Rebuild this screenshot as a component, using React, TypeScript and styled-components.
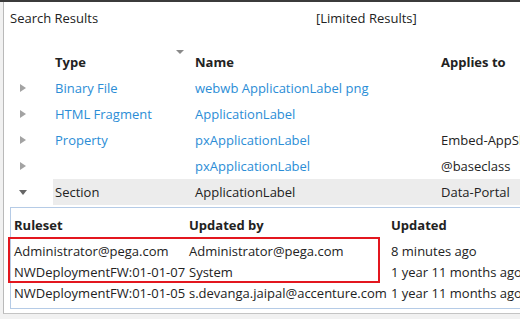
import React from "react";
import styled, { createGlobalStyle } from "styled-components";

const Global = createGlobalStyle`
  html, body { margin: 0; padding: 0; background: #f1f1f1; }
  body { font-family: "Open Sans", "DejaVu Sans", sans-serif; font-size: 13px; color: #222; }
`;

const Screen = styled.div`
  width: 520px;
  height: 319px;
  overflow: hidden;
  border-top: 2px solid #3b3b3b;
  box-sizing: border-box;
  background: #f1f1f1;
`;

const Panel = styled.div`
  margin-left: 3px;
  width: 560px;
  background: #fff;
  border-left: 1px solid #b9b9b9;
  border-bottom: 1px solid #c4c4c4;
  padding-bottom: 4px;
`;

const TitleBar = styled.div`
  display: flex;
  height: 47px;
  padding: 7px 0 0 6px;
  box-sizing: border-box;
  line-height: 18px;
  white-space: nowrap;
`;

const Title = styled.span`
  width: 306px;
`;

const Limited = styled.span`
  color: #222;
`;

const Grid = styled.div`
  display: grid;
  grid-template-columns: 49px 140px 246px 1fr;
  white-space: nowrap;
`;

const Cell = styled.div<{ $head?: boolean; $hl?: boolean; $link?: boolean }>`
  position: relative;
  height: 26px;
  line-height: 26px;
  padding-left: 2px;
  font-weight: ${(p) => (p.$head ? 700 : 400)};
  color: ${(p) => (p.$link ? "#2b8dd6" : "#222")};
  background: ${(p) => (p.$hl ? "#ececec" : "transparent")};
  overflow: hidden;
`;

const ExpCell = styled.div`
  height: 26px;
  display: flex;
  align-items: center;
  padding-left: 16px;
`;

const RightTri = styled.span`
  width: 0;
  height: 0;
  border-top: 4px solid transparent;
  border-bottom: 4px solid transparent;
  border-left: 6px solid #a3a3a3;
`;

const DownTri = styled.span`
  width: 0;
  height: 0;
  margin-left: -1px;
  border-left: 4px solid transparent;
  border-right: 4px solid transparent;
  border-top: 5px solid #666;
`;

const SortArrow = styled.span`
  position: absolute;
  right: 9px;
  top: 1px;
  width: 0;
  height: 0;
  border-left: 4px solid transparent;
  border-right: 4px solid transparent;
  border-top: 4px solid #8a8a8a;
`;

const Detail = styled.div`
  position: relative;
  margin: 2px 0 0 6px;
  border: 1px solid #b5cbe6;
  padding: 7px 0 4px 3px;
`;

const DRow = styled.div<{ $head?: boolean }>`
  display: grid;
  grid-template-columns: 175px 202px 1fr;
  height: 21px;
  line-height: 21px;
  white-space: nowrap;
  font-weight: ${(p) => (p.$head ? 700 : 400)};
  margin-bottom: ${(p) => (p.$head ? "5px" : "0")};
  color: #222;
`;

const Highlight = styled.div`
  position: absolute;
  left: -3px;
  top: 29px;
  width: 368px;
  height: 42px;
  border: 2px solid #e3171f;
`;

type Row = { type: string; name: string; applies: string; open?: boolean };

const rows: Row[] = [
  { type: "Binary File", name: "webwb ApplicationLabel png", applies: "" },
  { type: "HTML Fragment", name: "ApplicationLabel", applies: "" },
  { type: "Property", name: "pxApplicationLabel", applies: "Embed-AppShell" },
  { type: "", name: "pxApplicationLabel", applies: "@baseclass" },
  { type: "Section", name: "ApplicationLabel", applies: "Data-Portal", open: true },
];

const details = [
  ["Administrator@pega.com", "Administrator@pega.com", "8 minutes ago"],
  ["NWDeploymentFW:01-01-07", "System", "1 year 11 months ago"],
  ["NWDeploymentFW:01-01-05", "s.devanga.jaipal@accenture.com", "1 year 11 months ago"],
];

export default function App() {
  return (
    <>
      <Global />
      <Screen>
        <Panel>
          <TitleBar>
            <Title>Search Results</Title>
            <Limited>[Limited Results]</Limited>
          </TitleBar>
          <Grid>
            <ExpCell />
            <Cell $head>
              Type
              <SortArrow />
            </Cell>
            <Cell $head>Name</Cell>
            <Cell $head>Applies to</Cell>
            {rows.map((r, i) => (
              <React.Fragment key={i}>
                <ExpCell>{r.open ? <DownTri /> : <RightTri />}</ExpCell>
                <Cell $hl={r.open} $link={!r.open}>{r.type}</Cell>
                <Cell $hl={r.open} $link={!r.open}>{r.name}</Cell>
                <Cell $hl={r.open}>{r.applies}</Cell>
              </React.Fragment>
            ))}
          </Grid>
          <Detail>
            <DRow $head>
              <span>Ruleset</span>
              <span>Updated by</span>
              <span>Updated</span>
            </DRow>
            {details.map((d, i) => (
              <DRow key={i}>
                <span>{d[0]}</span>
                <span>{d[1]}</span>
                <span>{d[2]}</span>
              </DRow>
            ))}
            <Highlight />
          </Detail>
        </Panel>
      </Screen>
    </>
  );
}
